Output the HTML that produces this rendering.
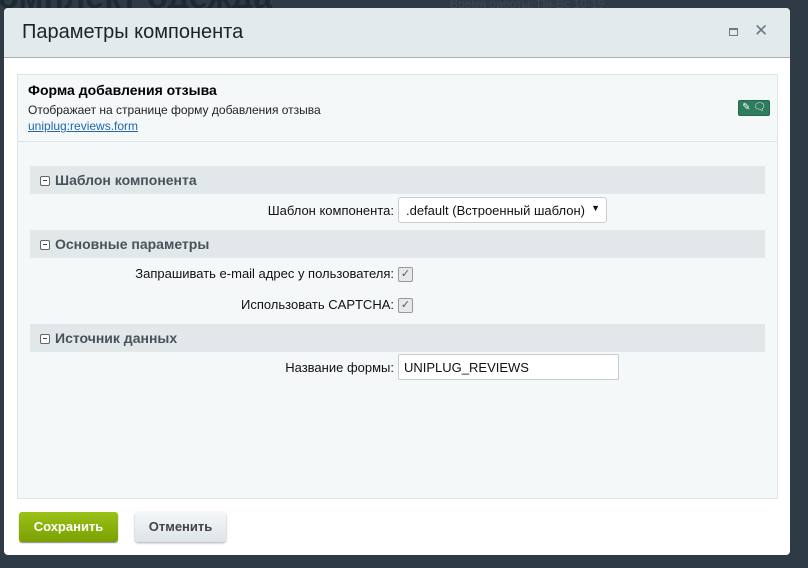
<!DOCTYPE html>
<html><head><meta charset="utf-8"><style>
*{box-sizing:border-box;margin:0;padding:0}
body{width:808px;height:568px;overflow:hidden;background:#2e3a44;font-family:"Liberation Sans",sans-serif;position:relative}
.bgt{position:absolute;color:#1e2a33;font-weight:bold;font-size:34px;left:-2px;top:-22px}
.bgs{position:absolute;color:#3c4852;font-size:12px;left:450px;top:-3px}
.dlg{position:absolute;left:4px;top:8px;width:786px;height:547px;background:#fff;border-radius:4px;overflow:hidden}
.hd{height:50px;background:#e2eaec;border-bottom:1px solid #a8b0b4;position:relative}
.hd h1{font-weight:normal;font-size:20px;color:#1e2226;position:absolute;left:18px;top:13px}
.mx{position:absolute;left:725px;top:20px;width:9px;height:8px;border:1px solid #6c7a86;border-top-width:2px}
.cl{position:absolute;left:750px;top:13px;font-size:17px;color:#6c7a86}
.box{position:absolute;left:13px;top:66px;width:761px;height:425px;background:#f5f8f9;border:1px solid #dce5e8}
.info{height:67px;border-bottom:1px solid #dce5e8;padding:7px 10px;position:relative}
.info b{font-size:14px;color:#000;display:block}
.info p{font-size:12px;color:#222;margin-top:5px}
.info a{font-size:12px;color:#2067b0;text-decoration:underline}
.ic{position:absolute;right:7px;top:25px;width:32px;height:16px;background:#2e7d5e;border:1px solid #226a4e;border-radius:2px;color:#fff;font-size:10px;text-align:center;line-height:14px}
.sec{margin:0 12px;height:28px;background:#e2e8ea;font-weight:bold;font-size:14px;color:#48525a;padding:6px 0 0 10px}
.sec i{display:inline-block;width:10px;height:10px;border:1px solid #666;border-radius:2px;vertical-align:-1px;margin-right:5px;position:relative;background:#fff}
.sec i:after{content:"";position:absolute;left:2px;top:3px;width:4px;height:1px;background:#444}
.row{position:relative;height:36px;font-size:13px;color:#111}
.lab{position:absolute;right:383px;text-align:right;white-space:nowrap}
.sel{position:absolute;left:380px;top:3px;width:209px;height:26px;background:#fff;border:1px solid #c7ccd0;border-radius:3px;padding:5px 0 0 7px;font-size:13px}
.sel:after{content:"▼";position:absolute;right:6px;top:5px;font-size:9px}
.cb{position:absolute;left:380px;width:15px;height:15px;background:#e6e8ea;border:1px solid #999;border-radius:2px;font-size:11px;line-height:13px;text-align:center;color:#555}
.inp{position:absolute;left:380px;top:2px;width:221px;height:26px;background:#fff;border:1px solid #c7ccd0;border-radius:2px;padding:5px 0 0 5px;font-size:13px}
.btn{position:absolute;top:504px;height:30px;border-radius:3px;font-size:13px;font-weight:bold;text-align:center;line-height:29px}
.save{left:15px;width:99px;background:linear-gradient(#9ac218,#7aa100);color:#fff;box-shadow:0 1px 1px #888}
.cancel{left:131px;width:91px;background:linear-gradient(#f4f7f8,#dde4e7);color:#444;box-shadow:0 1px 2px #aaa}
</style></head><body>
<div class="bgt">омплект одежда</div>
<div class="bgs">Время работы: Пн-Вс 10-19</div>
<div class="dlg">
<div class="hd"><h1>Параметры компонента</h1><div class="mx"></div><div class="cl">✕</div></div>
<div class="box">
<div class="info"><b>Форма добавления отзыва</b><p>Отображает на странице форму добавления отзыва</p><a>uniplug:reviews.form</a><div class="ic">✎ 🗨</div></div>
<div style="height:24px"></div>
<div class="sec"><i></i>Шаблон компонента</div>
<div class="row"><span class="lab" style="top:9px">Шаблон компонента:</span><div class="sel">.default (Встроенный шаблон)</div></div>
<div class="sec"><i></i>Основные параметры</div>
<div class="row" style="height:31px"><span class="lab" style="top:8px">Запрашивать e-mail адрес у пользователя:</span><div class="cb" style="top:9px">✓</div></div>
<div class="row" style="height:35px"><span class="lab" style="top:8px">Использовать CAPTCHA:</span><div class="cb" style="top:9px">✓</div></div>
<div class="sec"><i></i>Источник данных</div>
<div class="row"><span class="lab" style="top:8px">Название формы:</span><div class="inp">UNIPLUG_REVIEWS</div></div>
</div>
<div class="btn save">Сохранить</div>
<div class="btn cancel">Отменить</div>
</div>
</body></html>
